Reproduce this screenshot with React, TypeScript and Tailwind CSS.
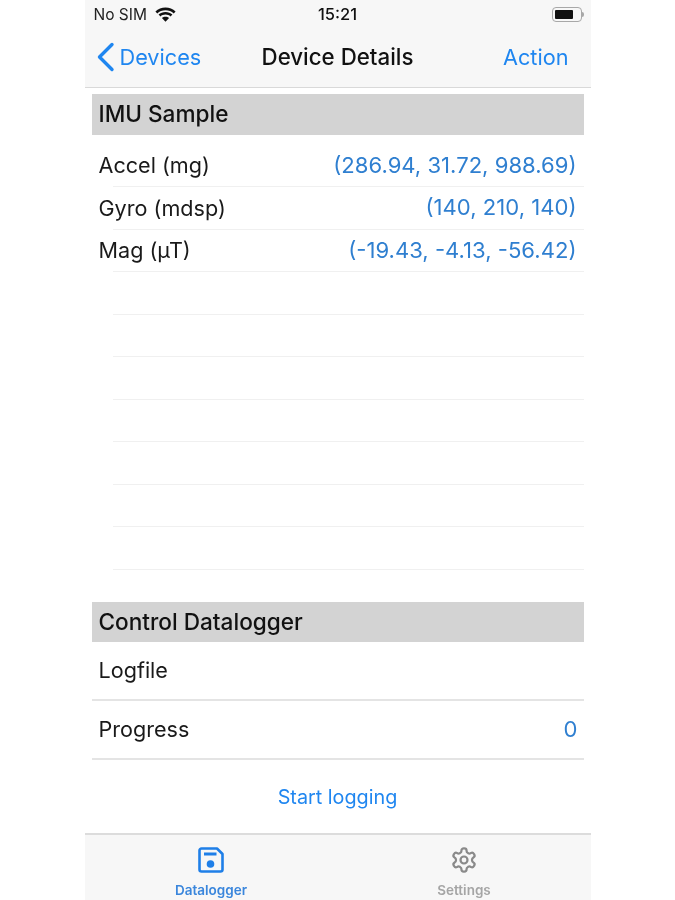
const font = "font-['Inter','Liberation_Sans',sans-serif]";

function WifiIcon() {
  return (
    <svg width="21" height="15" viewBox="0 0 20 15" className="block" preserveAspectRatio="none">
      <path d="M10 3.200c3 0 5.800 1.200 7.800 3.200l1.800-1.900C17 1.900 13.700.5 10 .5S3 1.900.4 4.500l1.800 1.900C4.200 4.400 7 3.200 10 3.200z" fill="#111" />
      <path d="M10 7.600c1.900 0 3.600.7 4.800 1.900l1.800-1.900C14.900 5.900 12.600 5 10 5s-4.900.9-6.600 2.600l1.800 1.900c1.200-1.200 2.900-1.900 4.800-1.900z" fill="#111" />
      <path d="M10 9.700c-1.300 0-2.500.5-3.400 1.400L10 14.700l3.400-3.600c-.9-.9-2.100-1.400-3.400-1.400z" fill="#111" />
    </svg>
  );
}

function Battery() {
  return (
    <div className="flex items-center">
      <div className="w-[30px] h-[15px] rounded-[4px] border border-[#a8a8a8] p-[2px] bg-[#f7f7f7]">
        <div className="w-[18px] h-full rounded-[1px] bg-[#111]" />
      </div>
      <div className="w-[2px] h-[5px] rounded-r-sm bg-[#a8a8a8]" />
    </div>
  );
}

function Section({ title }: { title: string }) {
  return (
    <div className="h-[40.500px] mx-[7px] px-[7px] bg-[#d3d3d3] flex items-center text-[22.600px] font-medium text-[#111]">
      {title}
    </div>
  );
}

function Row({ label, value }: { label: string; value?: string }) {
  return (
    <div className="h-[42.500px] ml-[28px] mr-[7px] border-b border-[#f0f0f0] flex items-center justify-between pr-[7px]">
      <span className="-ml-[14px] text-[21.600px] text-[#1a1a1a]">{label}</span>
      {value && <span className="text-[22.100px] text-[#2f7fd0]">{value}</span>}
    </div>
  );
}

function TallRow({ label, value }: { label: string; value?: string }) {
  return (
    <div className="h-[59px] mx-[7px] pl-[7px] pr-[6px] border-b-2 border-[#e4e4e4] flex items-center justify-between">
      <span className="text-[21.600px] text-[#1a1a1a]">{label}</span>
      {value && <span className="text-[22.100px] text-[#2f7fd0]">{value}</span>}
    </div>
  );
}

export default function App() {
  return (
    <div className={`${font} w-[675px] h-[900px] bg-white flex justify-center overflow-hidden blur-[0.5px]`}>
      <div className="w-[506px] h-[900px] flex flex-col bg-white">
        <div className="h-[88px] shrink-0 bg-[#f7f7f7] border-b border-[#d9d9d9] flex flex-col">
          <div className="h-[29px] pl-[9px] pr-[7px] flex items-center justify-between relative">
            <div className="flex items-center gap-[8px] text-[15.500px] text-[#222]">
              <span>No SIM</span>
              <WifiIcon />
            </div>
            <span className="absolute left-0 right-0 text-center text-[16.500px] font-medium text-[#111]">15:21</span>
            <Battery />
          </div>
          <div className="flex-1 flex items-center justify-between relative pl-[11px] pr-[22px] text-[21.700px] text-[#1f86f0] pb-[2px]">
            <div className="flex items-center gap-[5px]">
              <svg width="19" height="30" viewBox="0 0 19 30" className="block">
                <path d="M16 2.500 3.500 15 16 27.500" fill="none" stroke="#1f86f0" strokeWidth="3.400" strokeLinecap="round" strokeLinejoin="round" />
              </svg>
              <span>Devices</span>
            </div>
            <span className="absolute left-0 right-0 text-center text-[22.300px] font-medium text-[#111]">Device Details</span>
            <span>Action</span>
          </div>
        </div>

        <div className="flex-1 flex flex-col pt-[6px]">
          <Section title="IMU Sample" />
          <div className="flex flex-col pt-[10px]">
            <Row label="Accel (mg)" value="(286.94, 31.72, 988.69)" />
            <Row label="Gyro (mdsp)" value="(140, 210, 140)" />
            <Row label="Mag (µT)" value="(-19.43, -4.13, -56.42)" />
            <Row label="" />
            <Row label="" />
            <Row label="" />
            <Row label="" />
            <Row label="" />
            <Row label="" />
            <Row label="" />
          </div>
          <div className="h-[32px]" />
          <Section title="Control Datalogger" />
          <TallRow label="Logfile" />
          <TallRow label="Progress" value="0" />
          <div className="flex-1 flex items-center justify-center pt-[2px] text-[19.800px] text-[#1f86f0]">Start logging</div>
        </div>

        <div className="h-[67px] shrink-0 bg-[#f7f7f7] border-t-2 border-[#dcdcdc] flex">
          <div className="w-1/2 flex flex-col items-center pt-[12px] text-[#3a86dc]">
            <svg width="26" height="26" viewBox="0 0 26 26" className="block">
              <path d="M3.500 1.500h15.500l5.500 5.500v15.500a2 2 0 0 1-2 2h-19a2 2 0 0 1-2-2v-19a2 2 0 0 1 2-2z" fill="none" stroke="#1f7fe8" strokeWidth="2.600" strokeLinejoin="round" />
              <rect x="6" y="5.500" width="12.500" height="3" fill="#1f7fe8" />
              <circle cx="12.500" cy="17" r="3.800" fill="#1f7fe8" />
            </svg>
            <span className="text-[13.500px] font-semibold leading-[16px] mt-[9px]">Datalogger</span>
          </div>
          <div className="w-1/2 flex flex-col items-center pt-[12px] text-[#a5a5a5]">
            <svg width="28" height="28" viewBox="0 0 24 24" fill="none" stroke="#8a8a8a" strokeWidth="1.900" strokeLinecap="round" strokeLinejoin="round" className="block -mt-[1px]">
              <path d="M12.220 2h-.44a2 2 0 0 0-2 2v.18a2 2 0 0 1-1 1.730l-.43.250a2 2 0 0 1-2 0l-.150-.080a2 2 0 0 0-2.730.730l-.220.380a2 2 0 0 0 .730 2.730l.150.100a2 2 0 0 1 1 1.720v.510a2 2 0 0 1-1 1.740l-.150.090a2 2 0 0 0-.730 2.730l.220.380a2 2 0 0 0 2.730.730l.150-.080a2 2 0 0 1 2 0l.430.250a2 2 0 0 1 1 1.730V20a2 2 0 0 0 2 2h.440a2 2 0 0 0 2-2v-.180a2 2 0 0 1 1-1.730l.430-.250a2 2 0 0 1 2 0l.150.080a2 2 0 0 0 2.730-.730l.220-.390a2 2 0 0 0-.730-2.730l-.150-.080a2 2 0 0 1-1-1.740v-.500a2 2 0 0 1 1-1.740l.150-.090a2 2 0 0 0 .730-2.730l-.220-.380a2 2 0 0 0-2.730-.730l-.150.080a2 2 0 0 1-2 0l-.430-.250a2 2 0 0 1-1-1.730V4a2 2 0 0 0-2-2z" />
              <circle cx="12" cy="12" r="3" />
            </svg>
            <span className="text-[13.500px] font-semibold leading-[16px] mt-[8px]">Settings</span>
          </div>
        </div>
      </div>
    </div>
  );
}
